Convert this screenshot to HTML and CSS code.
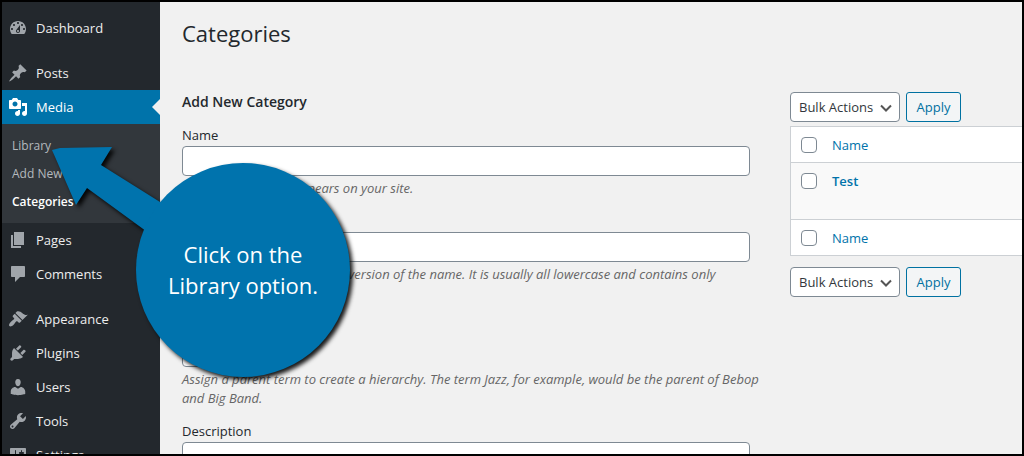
FILE: index.html
```html
<!DOCTYPE html>
<html lang="en">
<head>
    <meta charset="UTF-8">
    <meta name="viewport" content="width=device-width, initial-scale=1.0">
    <title>Categories</title>
    <link rel="stylesheet" href="styles.css">
</head>
<body>
    <nav class="sidebar">
        <ul class="menu">
            <li><a class="menu-link" href="#">
                <svg class="icon" viewBox="0 0 20 20"><path d="M3.76 16h12.48c1.1-1.37 1.76-3.11 1.76-5 0-4.42-3.58-8-8-8s-8 3.58-8 8c0 1.89.66 3.63 1.76 5zM10 4c.55 0 1 .45 1 1s-.45 1-1 1-1-.45-1-1 .45-1 1-1zM6 6c.55 0 1 .45 1 1s-.45 1-1 1-1-.45-1-1 .45-1 1-1zm8 0c.55 0 1 .45 1 1s-.45 1-1 1-1-.45-1-1 .45-1 1-1zm-5.37 5.55L12 7v6c0 1.1-.9 2-2 2s-2-.9-2-2c0-.57.24-1.08.63-1.45zM4 10c.55 0 1 .45 1 1s-.45 1-1 1-1-.45-1-1 .45-1 1-1zm12 0c.55 0 1 .45 1 1s-.45 1-1 1-1-.45-1-1 .45-1 1-1zm-5 3c0-.55-.45-1-1-1s-1 .45-1 1 .45 1 1 1 1-.45 1-1z"/></svg>
                Dashboard</a></li>
            <li class="separator"></li>
            <li><a class="menu-link" href="#">
                <svg class="icon" viewBox="0 0 20 20"><path d="M10.44 3.02l1.82-1.82 6.36 6.35-1.83 1.82c-1.05-.68-2.48-.57-3.41.36l-.75.75c-.92.93-1.04 2.35-.35 3.41l-1.83 1.82-2.41-2.41-2.8 2.79c-.42.42-3.38 2.71-3.8 2.29s1.86-3.39 2.28-3.81l2.79-2.79L4.1 9.36l1.83-1.82c1.05.69 2.48.57 3.4-.36l.75-.75c.93-.92 1.05-2.35.36-3.41z"/></svg>
                Posts</a></li>
            <li><a class="menu-link current" href="#">
                <svg class="icon" viewBox="0 0 20 20"><path d="M13 11V4c0-.55-.45-1-1-1h-1.67L9 1H5L3.67 3H2c-.55 0-1 .45-1 1v7c0 .55.45 1 1 1h10c.55 0 1-.45 1-1zM7 4.5c1.38 0 2.5 1.12 2.5 2.5S8.38 9.5 7 9.5 4.5 8.38 4.5 7 5.62 4.5 7 4.5zM14 6h5v10.5c0 1.38-1.12 2.5-2.5 2.5S14 17.88 14 16.5s1.12-2.5 2.5-2.5c.17 0 .34.02.5.05V9h-3V6zm-4 8.05V13h2v3.5c0 1.38-1.12 2.5-2.5 2.5S7 17.88 7 16.5 8.12 14 9.5 14c.17 0 .34.02.5.05z"/></svg>
                Media</a>
                <ul class="submenu">
                    <li><a href="#">Library</a></li>
                    <li><a href="#">Add New</a></li>
                    <li><a class="active" href="#">Categories</a></li>
                </ul>
            </li>
            <li><a class="menu-link" href="#">
                <svg class="icon" viewBox="0 0 20 20"><path d="M6 15V2h10v13H6zm-1 1h8v2H3V5h2v11z"/></svg>
                Pages</a></li>
            <li><a class="menu-link" href="#">
                <svg class="icon" viewBox="0 0 20 20"><path d="M4 2h12c.55 0 1 .45 1 1v9c0 .55-.45 1-1 1h-4l-5 5v-5H4c-.55 0-1-.45-1-1V3c0-.55.45-1 1-1z"/></svg>
                Comments</a></li>
            <li class="separator"></li>
            <li><a class="menu-link" href="#">
                <svg class="icon" viewBox="0 0 20 20"><path d="M14.48 11.06L7.41 3.99l1.5-1.5c.5-.56 2.3-.47 3.51.32 1.21.8 1.43 1.28 2.91 2.1 1.18.64 2.45 1.26 4.45.85zm-.71.71L6.7 4.7 4.93 6.47c-.39.39-.39 1.02 0 1.41l1.06 1.06c.39.39.39 1.03 0 1.42-.6.6-1.43 1.11-2.21 1.69-.35.26-.7.53-1.01.84C1.43 14.23.4 16.08 1.4 17.07c.99 1 2.84-.03 4.18-1.36.31-.31.58-.66.85-1.02.57-.78 1.08-1.61 1.69-2.21.39-.39 1.02-.39 1.41 0l1.06 1.06c.39.39 1.02.39 1.41 0z"/></svg>
                Appearance</a></li>
            <li><a class="menu-link" href="#">
                <svg class="icon" viewBox="0 0 20 20"><path d="M13.11 4.36L9.87 7.6 8 5.73l3.24-3.24c.35-.34 1.05-.2 1.56.32.52.51.66 1.21.31 1.55zm-8 1.77l.91-1.12 9.01 9.01-1.19.84c-.71.71-2.63 1.16-3.82 1.16H6.14L4.9 17.26c-.59.59-1.54.59-2.12 0-.59-.58-.59-1.53 0-2.12l1.24-1.24v-3.88c0-1.13.4-3.19 1.09-3.89zm7.26 3.97l3.24-3.24c.34-.35 1.04-.21 1.55.31.52.51.66 1.21.31 1.55l-3.24 3.25z"/></svg>
                Plugins</a></li>
            <li><a class="menu-link" href="#">
                <svg class="icon" viewBox="0 0 20 20"><path d="M10 9.25c-2.27 0-2.73-3.44-2.73-3.44C7 4.02 7.82 2 9.97 2c2.16 0 2.98 2.02 2.71 3.81 0 0-.41 3.44-2.68 3.44zm0 2.57L12.72 10c2.39 0 4.52 2.33 4.52 4.53v2.49s-3.65 1.13-7.24 1.13c-3.65 0-7.24-1.13-7.24-1.13v-2.49c0-2.25 1.94-4.48 4.47-4.48z"/></svg>
                Users</a></li>
            <li><a class="menu-link" href="#">
                <svg class="icon" viewBox="0 0 20 20"><path d="M16.68 9.77c-1.34 1.34-3.3 1.67-4.95.99l-5.41 6.52c-.99.99-2.59.99-3.58 0s-.99-2.59 0-3.57l6.52-5.42c-.68-1.65-.35-3.61.99-4.95 1.28-1.28 3.12-1.62 4.72-1.06l-2.89 2.89 2.82 2.82 2.86-2.87c.53 1.58.18 3.39-1.08 4.65zM3.81 16.21c.4.39 1.04.39 1.43 0 .4-.4.4-1.04 0-1.43-.39-.4-1.03-.4-1.43 0-.39.39-.39 1.03 0 1.43z"/></svg>
                Tools</a></li>
            <li><a class="menu-link" href="#">
                <svg class="icon" viewBox="0 0 20 20"><path d="M18 16V4c0-.55-.45-1-1-1H3c-.55 0-1 .45-1 1v12c0 .55.45 1 1 1h14c.55 0 1-.45 1-1zM8 11h1c.55 0 1 .45 1 1s-.45 1-1 1H8v1.5c0 .28-.22.5-.5.5s-.5-.22-.5-.5V13H6c-.55 0-1-.45-1-1s.45-1 1-1h1V5.5c0-.28.22-.5.5-.5s.5.22.5.5V11zm5-2h-1c-.55 0-1-.45-1-1s.45-1 1-1h1V5.5c0-.28.22-.5.5-.5s.5.22.5.5V7h1c.55 0 1 .45 1 1s-.45 1-1 1h-1v5.5c0 .28-.22.5-.5.5s-.5-.22-.5-.5V9z"/></svg>
                Settings</a></li>
        </ul>
    </nav>

    <main class="content">
        <h1>Categories</h1>
        <div class="columns">
            <form class="add-form">
                <h2>Add New Category</h2>
                <div class="field">
                    <label for="name">Name</label>
                    <input type="text" id="name">
                    <p>The name is how it appears on your site.</p>
                </div>
                <div class="field">
                    <label for="slug">Slug</label>
                    <input type="text" id="slug">
                    <p>The “slug” is the URL-friendly version of the name. It is usually all lowercase and contains only<br>letters and numbers.</p>
                </div>
                <div class="field">
                    <label for="parent">Parent Category</label>
                    <select id="parent">
                        <option>None</option>
                    </select>
                    <p>Assign a parent term to create a hierarchy. The term Jazz, for example, would be the parent of Bebop and Big Band.</p>
                </div>
                <div class="field">
                    <label for="description">Description</label>
                    <textarea id="description" rows="5"></textarea>
                </div>
            </form>

            <section class="list">
                <div class="actions">
                    <div class="select-box">
                        <select aria-label="Bulk actions">
                            <option>Bulk Actions</option>
                        </select>
                        <svg class="chevron" viewBox="0 0 12 8"><path d="M1 1.5l5 5 5-5"/></svg>
                    </div>
                    <button type="button">Apply</button>
                </div>
                <table>
                    <thead>
                        <tr>
                            <td class="check"><input type="checkbox" aria-label="Select all"></td>
                            <th><a href="#">Name</a></th>
                        </tr>
                    </thead>
                    <tbody>
                        <tr>
                            <td class="check"><input type="checkbox" aria-label="Select Test"></td>
                            <td><a class="row-title" href="#">Test</a></td>
                        </tr>
                    </tbody>
                    <tfoot>
                        <tr>
                            <td class="check"><input type="checkbox" aria-label="Select all"></td>
                            <th><a href="#">Name</a></th>
                        </tr>
                    </tfoot>
                </table>
                <div class="actions">
                    <div class="select-box">
                        <select aria-label="Bulk actions">
                            <option>Bulk Actions</option>
                        </select>
                        <svg class="chevron" viewBox="0 0 12 8"><path d="M1 1.5l5 5 5-5"/></svg>
                    </div>
                    <button type="button">Apply</button>
                </div>
            </section>
        </div>
    </main>

    <!-- help bubble pointing at the Library item -->
    <div class="callout">
        <svg class="callout-shape" viewBox="0 0 320 250">
            <path d="M2 10L10 8 62 7 51 25 118 67 100 94 37 48 26 65z"/>
            <circle cx="193" cy="130" r="107"/>
        </svg>
        <p class="callout-text">Click on the<br>Library option.</p>
    </div>
</body>
</html>
```
FILE: styles.css
```css
* {
    box-sizing: border-box;
}
body {
    position: relative;
    display: flex;
    height: 100vh;
    margin: 0;
    overflow: hidden;
    border: 2px solid #000;
    background: #f1f1f1;
    color: #23282d;
    font-family: "Open Sans", "Noto Sans", sans-serif;
    font-size: 13px;
    line-height: 19px;
}
a {
    color: #0073aa;
    text-decoration: none;
}
ul {
    list-style: none;
    margin: 0;
    padding: 0;
}

/* Sidebar */
.sidebar {
    flex: 0 0 158px;
    background: #23282d;
}
.menu {
    padding-top: 9px;
}
.menu-link {
    position: relative;
    display: flex;
    align-items: center;
    gap: 8px;
    height: 34px;
    padding-left: 6px;
    color: #eee;
}
.icon {
    width: 20px;
    height: 20px;
    fill: #a0a5aa;
}
.separator {
    height: 11px;
}
.menu-link.current {
    background: #0073aa;
    color: #fff;
}
.menu-link.current .icon {
    fill: #fff;
}
.menu-link.current::after {
    content: "";
    position: absolute;
    right: 0;
    top: 9px;
    border: 8px solid transparent;
    border-right-color: #f1f1f1;
    border-left: 0;
}
.submenu {
    padding: 8px 0 7px 10px;
    background: #32373c;
}
.submenu a {
    display: block;
    color: #b4b9be;
    font-size: 12px;
    line-height: 28px;
}
.submenu .active {
    color: #fff;
    font-weight: 600;
}

/* Content */
.content {
    flex: 1;
    min-width: 0;
    padding: 16px 0 0 22px;
}
h1 {
    margin: 0;
    font-size: 22px;
    font-weight: 400;
    line-height: 30px;
}
.columns {
    display: grid;
    grid-template-columns: 71fr 29fr;
    gap: 40px;
    margin-top: 44px;
}
h2 {
    margin: 0 0 13px;
    font-size: 14px;
    font-weight: 600;
    line-height: 20px;
}
.field {
    margin-bottom: 13px;
}
.field label {
    display: block;
    margin-bottom: 1px;
    line-height: 20px;
}
.field p {
    margin: 3px -10px 0 0;
    color: #666;
    font-style: italic;
}
input[type="text"],
textarea,
select {
    border: 1px solid #7e8993;
    border-radius: 4px;
    background: #fff;
    color: #32373c;
    font: inherit;
}
input[type="text"],
textarea {
    display: block;
    width: 100%;
    height: 30px;
}
textarea {
    height: 100px;
    resize: none;
}
select {
    display: block;
    height: 30px;
    padding: 0 8px;
    appearance: none;
}

/* Category list */
.actions {
    display: flex;
    gap: 6px;
}
.select-box {
    position: relative;
}
.select-box select {
    width: 110px;
}
.chevron {
    position: absolute;
    right: 8px;
    top: 12px;
    width: 12px;
    height: 8px;
    fill: none;
    stroke: #555;
    stroke-width: 2;
    pointer-events: none;
}
button {
    width: 55px;
    height: 30px;
    padding: 0;
    border: 1px solid #0071a1;
    border-radius: 3px;
    background: #f3f5f6;
    color: #0071a1;
    font: inherit;
}
table {
    width: 100%;
    margin: 4px 0 11px;
    border: 1px solid #ccd0d4;
    border-right: 0;
    border-spacing: 0;
    background: #fff;
}
th,
td {
    height: 35px;
    padding: 9px 9px 7px;
    font-weight: 400;
    text-align: left;
    vertical-align: top;
}
tbody td {
    height: 58px;
    border: solid #ccd0d4;
    border-width: 1px 0;
    background: #f9f9f9;
}
.check {
    width: 32px;
    padding-left: 10px;
    padding-right: 0;
}
.row-title {
    font-weight: 600;
}
input[type="checkbox"] {
    display: block;
    width: 16px;
    height: 16px;
    margin: 1px 0 0;
    border: 1px solid #7e8993;
    border-radius: 4px;
    background: #fff;
    appearance: none;
}

/* Help bubble */
.callout {
    position: absolute;
    left: 48px;
    top: 138px;
    width: 320px;
    height: 250px;
}
.callout-shape {
    display: block;
    width: 100%;
    fill: #0073ad;
    filter: drop-shadow(3px 3px 2px rgba(0, 0, 0, 0.9));
}
.callout-text {
    position: absolute;
    left: 86px;
    top: 99px;
    width: 214px;
    margin: 0;
    color: #fff;
    font-size: 22px;
    line-height: 31px;
    text-align: center;
}
```
